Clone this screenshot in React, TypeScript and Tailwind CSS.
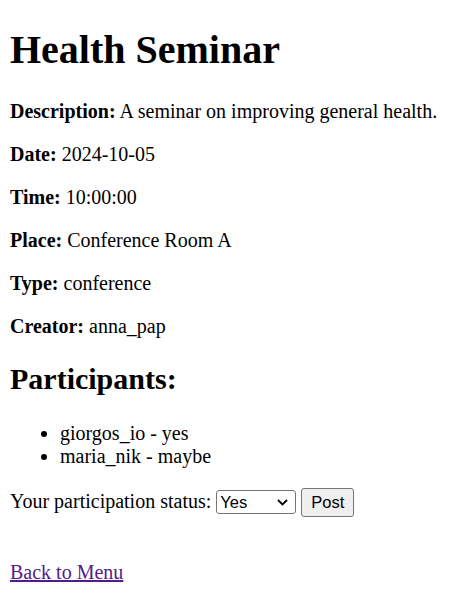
const details = [
  { label: "Description:", value: "A seminar on improving general health." },
  { label: "Date:", value: "2024-10-05" },
  { label: "Time:", value: "10:00:00" },
  { label: "Place:", value: "Conference Room A" },
  { label: "Type:", value: "conference" },
  { label: "Creator:", value: "anna_pap" },
];

const participants = ["giorgos_io - yes", "maria_nik - maybe"];

export default function App() {
  return (
    <div className="min-h-screen bg-white px-[10px] pt-[26.8px] pb-[20px] font-['Liberation_Serif',serif] text-[20px] leading-[23px] text-black">
      <h1 className="mb-[26.8px] text-[40px] font-bold leading-[46px]">Health Seminar</h1>

      {details.map((d) => (
        <p key={d.label} className="my-[20px]">
          <strong className="font-bold">{d.label}</strong> {d.value}
        </p>
      ))}

      <h2 className="mt-[24.9px] text-[30px] font-bold leading-[34.5px]">Participants:</h2>
      <ul className="mt-[24.9px] mb-[20px] list-disc pl-[50px]">
        {participants.map((p) => (
          <li key={p}>{p}</li>
        ))}
      </ul>

      <div className="flex items-baseline">
        <span>Your participation status:</span>
        <div className="ml-[5px] flex h-[24px] w-[80px] items-center justify-between rounded-[3px] border border-[#767676] bg-white pl-[3px] pr-[7px] font-['Liberation_Sans',sans-serif] text-[16.5px] leading-none">
          <span>Yes</span>
          <svg width="11" height="7" viewBox="0 0 11 7" fill="none">
            <path d="M1 1l4.5 4.5L10 1" stroke="black" strokeWidth="1.8" />
          </svg>
        </div>
        <button className="ml-[5px] flex h-[29px] items-center rounded-[3px] border border-[#767676] bg-[#efefef] px-[9px] font-['Liberation_Sans',sans-serif] text-[16.5px] leading-none">
          Post
        </button>
      </div>

      <div className="mt-[44px]">
        <a href="#" className="text-[#551a8b] underline">
          Back to Menu
        </a>
      </div>
    </div>
  );
}
